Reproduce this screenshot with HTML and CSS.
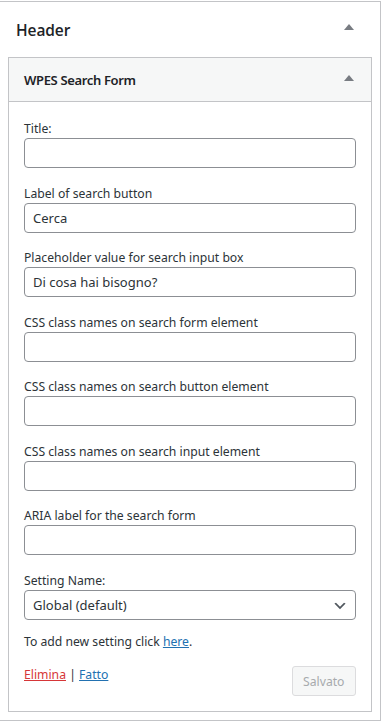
FILE: index.html
```html
<!DOCTYPE html>
<html lang="it">
<head>
<meta charset="utf-8">
<title>Header widget</title>
<link rel="stylesheet" href="styles.css">
</head>
<body>
<div class="panel">
  <div class="panel-head">
    <h2 class="panel-title">Header</h2>
    <svg class="toggle" width="10" height="6" viewBox="0 0 10 6"><polygon points="0,6 5,0 10,6" fill="#787c82"/></svg>
  </div>
  <div class="widget">
    <div class="widget-head">
      <h3 class="widget-title">WPES Search Form</h3>
      <svg class="toggle" width="10" height="6" viewBox="0 0 10 6"><polygon points="0,6 5,0 10,6" fill="#787c82"/></svg>
    </div>
    <form class="widget-body">
      <div class="fields">
        <div class="field">
          <label class="label">Title:</label>
          <input class="input" type="text" value="">
        </div>
        <div class="field">
          <label class="label">Label of search button</label>
          <input class="input" type="text" value="Cerca">
        </div>
        <div class="field">
          <label class="label">Placeholder value for search input box</label>
          <input class="input" type="text" value="Di cosa hai bisogno?">
        </div>
        <div class="field">
          <label class="label">CSS class names on search form element</label>
          <input class="input" type="text" value="">
        </div>
        <div class="field">
          <label class="label">CSS class names on search button element</label>
          <input class="input" type="text" value="">
        </div>
        <div class="field">
          <label class="label">CSS class names on search input element</label>
          <input class="input" type="text" value="">
        </div>
        <div class="field">
          <label class="label">ARIA label for the search form</label>
          <input class="input" type="text" value="">
        </div>
        <div class="field">
          <label class="label">Setting Name:</label>
          <div class="select-wrap">
            <select class="select"><option>Global (default)</option></select>
            <svg class="chevron" width="16" height="16" viewBox="0 0 20 20"><path d="M5 6l5 5 5-5 2 1-7 7-7-7 2-1z" fill="#50575e"/></svg>
          </div>
        </div>
      </div>
      <p class="note">To add new setting click <a class="link" href="#">here</a>.</p>
      <div class="actions">
        <div class="links"><a class="delete" href="#">Elimina</a> | <a class="link" href="#">Fatto</a></div>
        <button class="save" type="button" disabled>Salvato</button>
      </div>
    </form>
  </div>
</div>
</body>
</html>
```
FILE: styles.css
```css
html, body {
  margin: 0;
  padding: 0;
  background: #fff;
}
body {
  font-family: "Noto Sans", "Open Sans", sans-serif;
  font-size: 12.2px;
  color: #2c3338;
  padding-top: 1px;
}
.panel {
  height: 718px;
  border-top: 1px solid #c3c4c7;
  border-right: 1px solid #c3c4c7;
  border-bottom: 1px solid #c3c4c7;
  display: flex;
  flex-direction: column;
}
.panel-head {
  flex-shrink: 0;
  height: 55px;
  display: flex;
  align-items: center;
  justify-content: space-between;
  padding: 0 26px 0 16px;
}
.panel-title {
  margin: 0;
  font-family: "Open Sans", sans-serif;
  font-size: 15.5px;
  font-weight: 600;
  color: #1d2327;
  letter-spacing: -0.1px;
}
.panel-head .toggle {
  margin-top: -6px;
}
.widget {
  flex-shrink: 0;
  margin: 0 8px;
  border: 1px solid #c3c4c7;
}
.widget-head {
  height: 43px;
  background: #f6f7f7;
  border-bottom: 1px solid #c3c4c7;
  display: flex;
  align-items: center;
  justify-content: space-between;
  padding: 0 17px 0 15px;
}
.widget-title {
  margin: 1px 0 0;
  font-size: 13px;
  font-weight: 600;
  color: #1d2327;
  letter-spacing: -0.35px;
}
.widget-head .toggle {
  margin-top: -3px;
}
.widget-body {
  padding: 18px 15px 15px;
  display: flex;
  flex-direction: column;
}
.fields {
  display: flex;
  flex-direction: column;
  gap: 16.5px;
}
.field {
  display: flex;
  flex-direction: column;
}
.label {
  height: 18px;
  line-height: 18px;
  color: #2c3338;
}
.input, .select {
  box-sizing: border-box;
  width: 100%;
  height: 30px;
  margin: 0;
  border: 1px solid #8c8f94;
  border-radius: 4px;
  background: #fff;
  font-family: "Noto Sans", "Open Sans", sans-serif;
  font-size: 13px;
  color: #2c3338;
  padding: 0 8px;
  outline: none;
}
.select-wrap {
  position: relative;
}
.select {
  -webkit-appearance: none;
  appearance: none;
  padding: 0 24px 0 8px;
}
.chevron {
  position: absolute;
  right: 8px;
  top: 8px;
  pointer-events: none;
}
.note {
  margin: 13.5px 0 0;
  line-height: 18px;
}
.link {
  color: #2271b1;
  text-decoration: underline;
}
.delete {
  color: #d63638;
  text-decoration: underline;
}
.actions {
  margin-top: 15px;
  display: flex;
  justify-content: space-between;
  align-items: flex-start;
}
.links {
  line-height: 18px;
}
.save {
  height: 30px;
  padding: 0 10.5px;
  border: 1px solid #dcdcde;
  border-radius: 3px;
  background: #f6f7f7;
  color: #a7aaad;
  font-family: "Noto Sans", "Open Sans", sans-serif;
  font-size: 12.2px;
}
```
